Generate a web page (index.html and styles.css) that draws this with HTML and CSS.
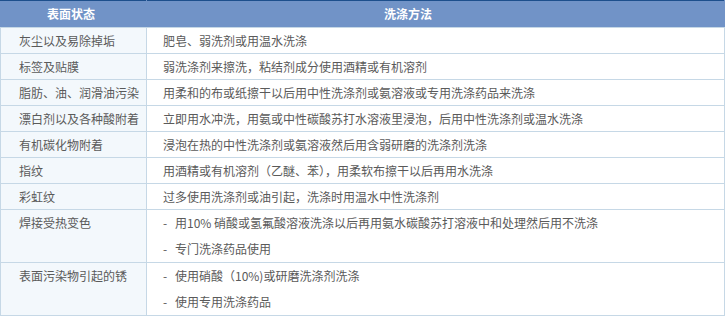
FILE: index.html
```html
<!DOCTYPE html>
<html lang="zh-CN">
<head>
<meta charset="utf-8">
<link rel="stylesheet" href="styles.css">
</head>
<body>
<table class="tbl">
  <thead>
    <tr>
      <th class="c1 h1">表面状态</th>
      <th class="c2 h2">洗涤方法</th>
    </tr>
  </thead>
  <tbody>
    <tr><td class="c1">灰尘以及易除掉垢</td><td class="c2">肥皂、弱洗剂或用温水洗涤</td></tr>
    <tr><td class="c1">标签及贴膜</td><td class="c2">弱洗涤剂来擦洗，粘结剂成分使用酒精或有机溶剂</td></tr>
    <tr><td class="c1">脂肪、油、润滑油污染</td><td class="c2">用柔和的布或纸擦干以后用中性洗涤剂或氨溶液或专用洗涤药品来洗涤</td></tr>
    <tr><td class="c1">漂白剂以及各种酸附着</td><td class="c2">立即用水冲洗，用氨或中性碳酸苏打水溶液里浸泡，后用中性洗涤剂或温水洗涤</td></tr>
    <tr><td class="c1">有机碳化物附着</td><td class="c2">浸泡在热的中性洗涤剂或氨溶液然后用含弱研磨的洗涤剂洗涤</td></tr>
    <tr><td class="c1">指纹</td><td class="c2">用酒精或有机溶剂（乙醚、苯），用柔软布擦干以后再用水洗涤</td></tr>
    <tr><td class="c1">彩虹纹</td><td class="c2">过多使用洗涤剂或油引起，洗涤时用温水中性洗涤剂</td></tr>
    <tr class="tall"><td class="c1">焊接受热变色</td><td class="c2"><div class="line"><span class="dash">-</span>用10% 硝酸或氢氟酸溶液洗涤以后再用氨水碳酸苏打溶液中和处理然后用不洗涤</div><div class="line"><span class="dash">-</span>专门洗涤药品使用</div></td></tr>
    <tr class="tall"><td class="c1">表面污染物引起的锈</td><td class="c2"><div class="line"><span class="dash">-</span>使用硝酸（10%)或研磨洗涤剂洗涤</div><div class="line"><span class="dash">-</span>使用专用洗涤药品</div></td></tr>
  </tbody>
</table>
</body>
</html>
```
FILE: styles.css
```css
html, body {
  margin: 0;
  padding: 0;
  background: #ffffff;
}
.tbl {
  width: 725px;
  border-collapse: collapse;
  table-layout: fixed;
  font-family: "Noto Sans CJK SC", "Liberation Sans", sans-serif;
  font-size: 12px;
  color: #5a5a5a;
}
.tbl th {
  background: #7193c7;
  color: #ffffff;
  font-weight: bold;
  height: 26px;
  padding: 0;
  border-top: 1px solid #1d4f8c;
  border-left: 1px solid #7193c7;
  border-right: 1px solid #7193c7;
  border-bottom: 1px solid #c6d8e6;
  text-align: left;
  line-height: 26px;
}
.h1 { padding-left: 46px !important; }
.h2 { padding-left: 237px !important; }
.tbl td {
  height: 25px;
  padding: 0;
  border: 1px solid #c6d8e6;
  line-height: 25px;
  vertical-align: middle;
  white-space: nowrap;
}
.c1 {
  width: 146px;
  box-sizing: border-box;
}
.tbl td.c1 {
  background: #f3f8fc;
  padding-left: 18px;
}
.tbl td.c2 {
  padding-left: 16px;
}
.tall td {
  height: 52px;
  vertical-align: top;
}
.line {
  height: 26px;
  line-height: 26px;
}
.dash {
  display: inline-block;
  width: 12px;
}
.tall td.c1 {
  line-height: 26px;
}
```
